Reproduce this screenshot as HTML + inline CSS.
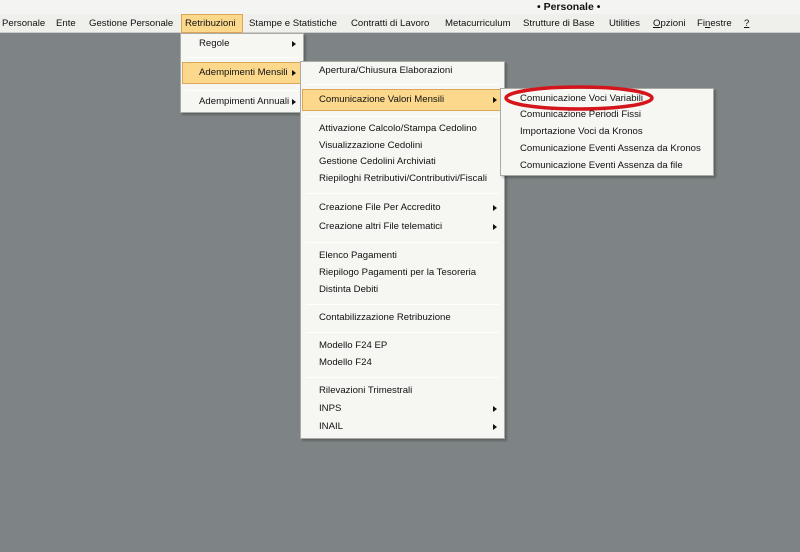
<!DOCTYPE html>
<html><head><meta charset="utf-8"><style>
*{margin:0;padding:0;box-sizing:border-box}
body{width:800px;height:552px;background:#7e8485;position:relative;overflow:hidden;font-family:"Liberation Sans","DejaVu Sans",sans-serif;font-size:9.6px;color:#111}
.a{position:absolute;white-space:nowrap}
#title{left:0;top:0;width:800px;height:14px;background:#f4f4f2}
#bar{left:0;top:14px;width:800px;height:19px;background:#efefec;border-bottom:1px solid #ccc}
.menu{background:#f6f6f3;border:1px solid #a9a9a6;box-shadow:2px 2px 2px rgba(0,0,0,.25)}
.sep{position:absolute;height:1px;background:#cfcfcb;border-bottom:1px solid #fff}
.hl{position:absolute;background:#fbd88c;border:1px solid #dca65a}
.arr{position:absolute;width:0;height:0;border-top:3.5px solid transparent;border-bottom:3.5px solid transparent;border-left:4px solid #111}
</style></head><body>
<div class="a" id="title"></div>
<div class="a" style="left:537px;top:1px;font-weight:bold;font-size:10.5px">• Personale •</div>
<div class="a" id="bar"></div>
<div class="a" style="left:181px;top:14px;width:62px;height:19px;background:#fbd88c;border:1px solid #dca65a"></div>
<div class="a" style="left:2px;top:18px">Personale</div>
<div class="a" style="left:56px;top:18px">Ente</div>
<div class="a" style="left:89px;top:18px">Gestione Personale</div>
<div class="a" style="left:185px;top:18px">Retribuzioni</div>
<div class="a" style="left:249px;top:18px">Stampe e Statistiche</div>
<div class="a" style="left:351px;top:18px">Contratti di Lavoro</div>
<div class="a" style="left:445px;top:18px">Metacurriculum</div>
<div class="a" style="left:523px;top:18px">Strutture di Base</div>
<div class="a" style="left:609px;top:18px">Utilities</div>
<div class="a" style="left:653px;top:18px"><u>O</u>pzioni</div>
<div class="a" style="left:697px;top:18px">Fi<u>n</u>estre</div>
<div class="a" style="left:744px;top:18px"><u>?</u></div>

<!-- menu 1 -->
<div class="a menu" style="left:180px;top:33px;width:124px;height:80px"></div>
<div class="a" style="left:199px;top:38px">Regole</div><div class="arr" style="left:292px;top:41px"></div>
<div class="sep" style="left:186px;top:57px;width:112px"></div>
<div class="hl" style="left:182px;top:62px;width:120px;height:22px"></div>
<div class="a" style="left:199px;top:67px">Adempimenti Mensili</div><div class="arr" style="left:292px;top:70px"></div>
<div class="sep" style="left:186px;top:90px;width:112px"></div>
<div class="a" style="left:199px;top:96px">Adempimenti Annuali</div><div class="arr" style="left:292px;top:99px"></div>

<!-- menu 2 -->
<div class="a menu" style="left:300px;top:61px;width:205px;height:378px"></div>
<div class="a" style="left:319px;top:65px">Apertura/Chiusura Elaborazioni</div>
<div class="sep" style="left:306px;top:84px;width:193px"></div>
<div class="hl" style="left:302px;top:89px;width:201px;height:22px"></div>
<div class="a" style="left:319px;top:94px">Comunicazione Valori Mensili</div><div class="arr" style="left:493px;top:97px"></div>
<div class="sep" style="left:306px;top:116px;width:193px"></div>
<div class="a" style="left:319px;top:123px">Attivazione Calcolo/Stampa Cedolino</div>
<div class="a" style="left:319px;top:140px">Visualizzazione Cedolini</div>
<div class="a" style="left:319px;top:156px">Gestione Cedolini Archiviati</div>
<div class="a" style="left:319px;top:173px">Riepiloghi Retributivi/Contributivi/Fiscali</div>
<div class="sep" style="left:306px;top:193px;width:193px"></div>
<div class="a" style="left:319px;top:202px">Creazione File Per Accredito</div><div class="arr" style="left:493px;top:205px"></div>
<div class="a" style="left:319px;top:221px">Creazione altri File telematici</div><div class="arr" style="left:493px;top:224px"></div>
<div class="sep" style="left:306px;top:242px;width:193px"></div>
<div class="a" style="left:319px;top:250px">Elenco Pagamenti</div>
<div class="a" style="left:319px;top:267px">Riepilogo Pagamenti per la Tesoreria</div>
<div class="a" style="left:319px;top:284px">Distinta Debiti</div>
<div class="sep" style="left:306px;top:304px;width:193px"></div>
<div class="a" style="left:319px;top:312px">Contabilizzazione Retribuzione</div>
<div class="sep" style="left:306px;top:332px;width:193px"></div>
<div class="a" style="left:319px;top:340px">Modello F24 EP</div>
<div class="a" style="left:319px;top:357px">Modello F24</div>
<div class="sep" style="left:306px;top:377px;width:193px"></div>
<div class="a" style="left:319px;top:385px">Rilevazioni Trimestrali</div>
<div class="a" style="left:319px;top:403px">INPS</div><div class="arr" style="left:493px;top:406px"></div>
<div class="a" style="left:319px;top:421px">INAIL</div><div class="arr" style="left:493px;top:424px"></div>

<!-- menu 3 -->
<div class="a menu" style="left:500px;top:88px;width:214px;height:88px"></div>
<div class="a" style="left:520px;top:93px">Comunicazione Voci Variabili</div>
<div class="a" style="left:520px;top:109px">Comunicazione Periodi Fissi</div>
<div class="a" style="left:520px;top:126px">Importazione Voci da Kronos</div>
<div class="a" style="left:520px;top:143px">Comunicazione Eventi Assenza da Kronos</div>
<div class="a" style="left:520px;top:160px">Comunicazione Eventi Assenza da file</div>
<svg class="a" style="left:500px;top:82px" width="160" height="34"><ellipse cx="79" cy="16" rx="73" ry="11" fill="none" stroke="#d4161c" stroke-width="3.5"/></svg>
</body></html>
